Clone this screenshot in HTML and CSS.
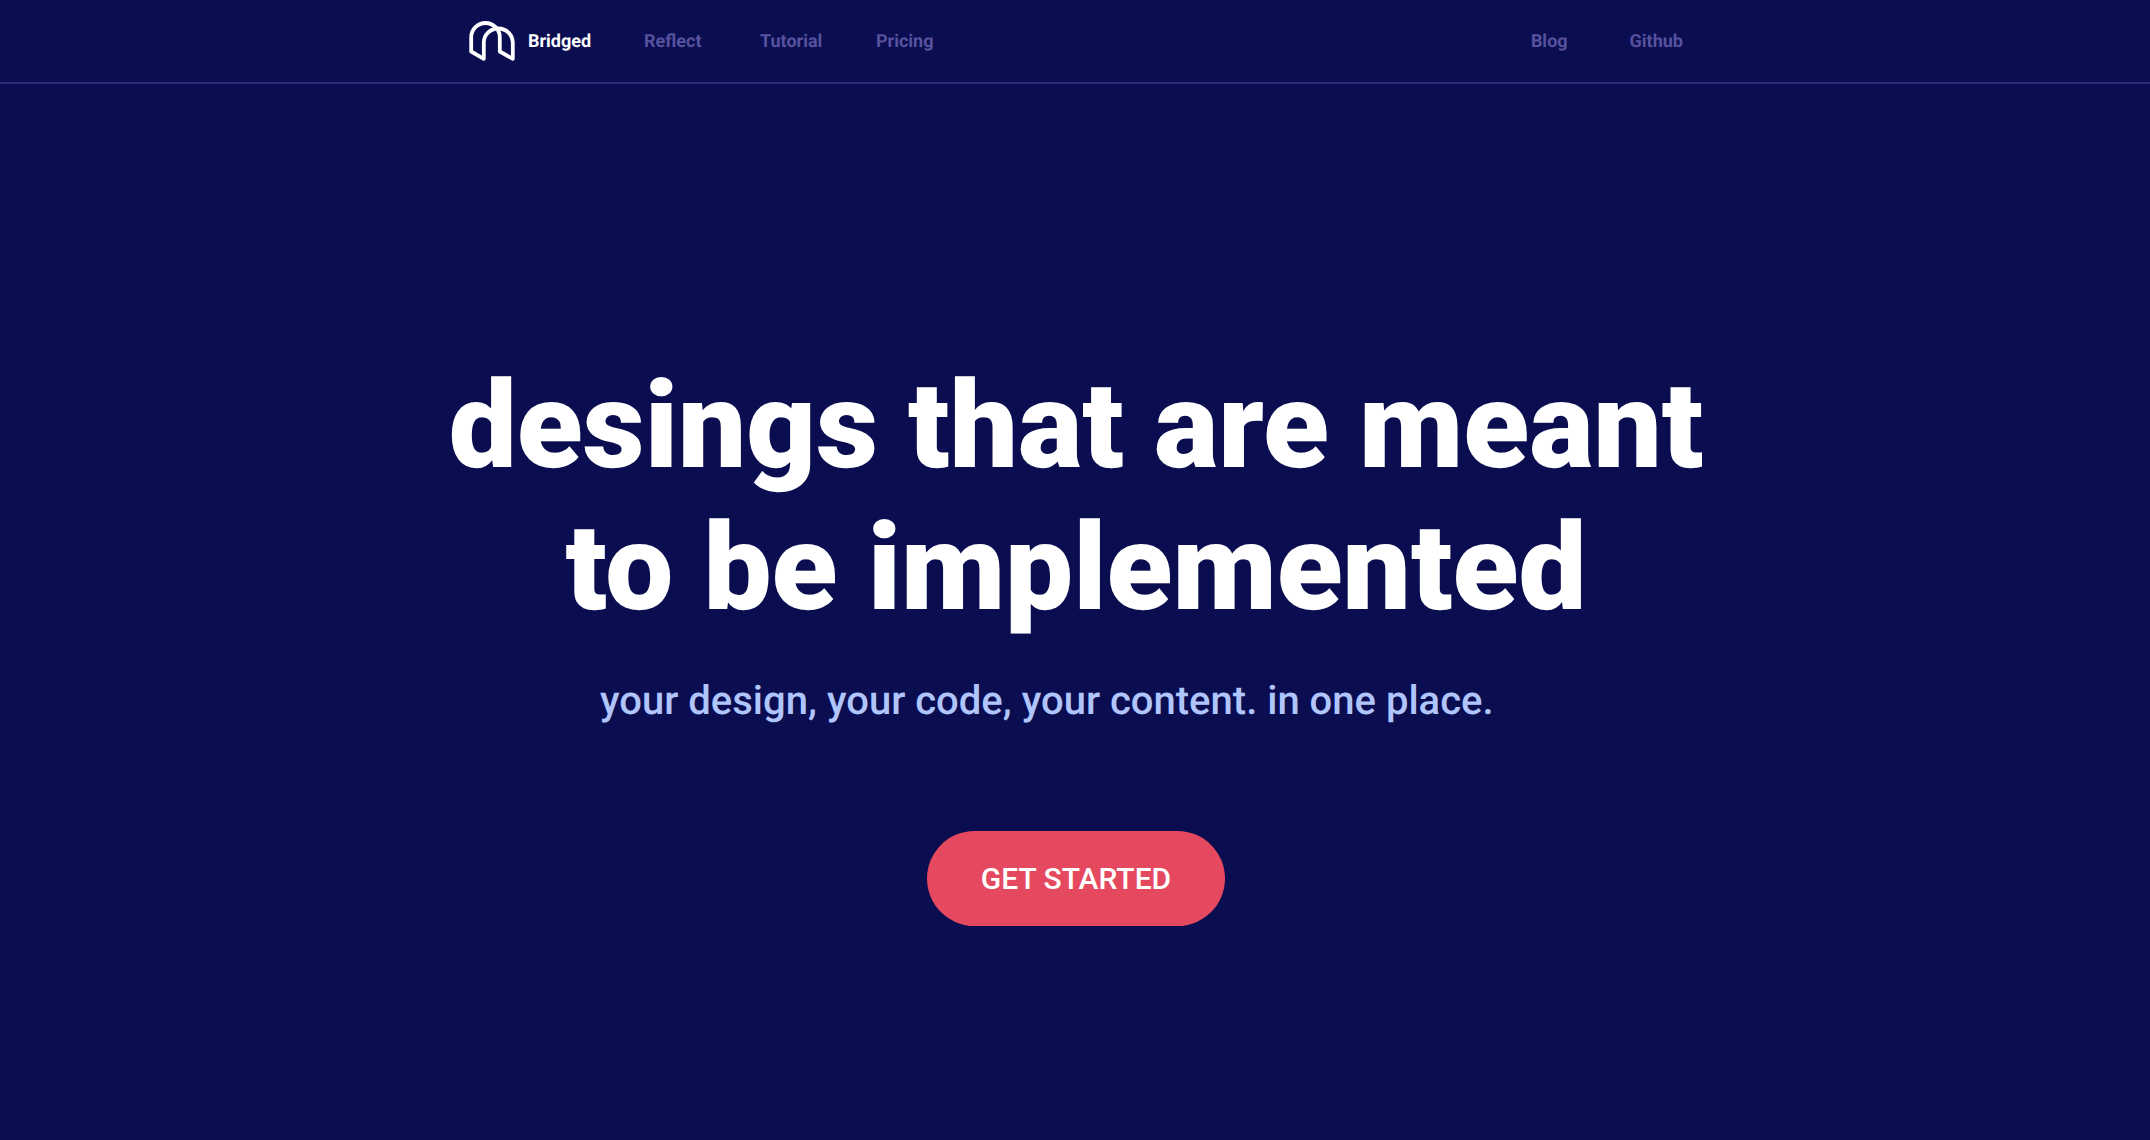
FILE: index.html
```html
<!DOCTYPE html>
<html lang="en">
<head>
  <meta charset="utf-8">
  <meta name="viewport" content="width=device-width, initial-scale=1">
  <title>Bridged</title>
  <link rel="stylesheet" href="styles.css">
</head>
<body>
  <header class="site-header">
    <nav class="nav">
      <a class="brand" href="#">
        <svg class="brand-logo" viewBox="0 0 46 40" fill="none" stroke="#fff" stroke-width="3.800" stroke-linejoin="round" stroke-linecap="round" aria-hidden="true">
          <path d="M2.200 16.200C2.200 8.300 8.600 2 16.500 2S30.800 8.300 30.800 16.200V30.500L43.800 37.800V21.600C43.800 13.700 37.300 7.500 29.300 7.500S14.800 13.700 14.800 21.600V37.800L2.200 30.500Z"/>
        </svg>
        <span class="brand-name">Bridged</span>
      </a>
      <a class="nav-link" href="#">Reflect</a>
      <a class="nav-link" href="#">Tutorial</a>
      <a class="nav-link" href="#">Pricing</a>
      <div class="nav-end">
        <a href="#">Blog</a>
        <a href="#">Github</a>
      </div>
    </nav>
  </header>
  <main class="hero">
    <h1 class="hero-title">desings that are meant<br>to be implemented</h1>
    <p class="hero-subtitle">your design, your code, your content. in one place.</p>
    <button class="cta" type="button">GET STARTED</button>
  </main>
</body>
</html>
```
FILE: styles.css
```css
* {
  box-sizing: border-box;
}

body {
  margin: 0;
  min-height: 100vh;
  background: #0a0d50;
  color: #fff;
  font-family: Roboto, sans-serif;
  text-rendering: geometricPrecision;
}

a {
  color: inherit;
  text-decoration: none;
}

.site-header {
  padding: 0 24px 0 26px;
  border-bottom: 2px solid #2d2a7c;
}

.nav {
  display: flex;
  align-items: center;
  max-width: 1214px;
  height: 82px;
  margin: 0 auto;
  color: #57519f;
  font-size: 18px;
  font-weight: 700;
}

.brand {
  display: flex;
  align-items: center;
  gap: 13px;
  color: #fff;
}

.brand-logo {
  width: 46px;
  height: 40px;
}

.brand-name,
.nav-link {
  min-width: 116px;
}

.nav-end {
  display: flex;
  gap: 62px;
  margin-left: auto;
}

.hero {
  display: flex;
  flex-direction: column;
  align-items: center;
  padding: 271px 24px 120px 26px;
}

.hero-title {
  margin: 0;
  font-size: 121px;
  font-weight: 900;
  line-height: 142px;
  text-align: center;
}

.hero-subtitle {
  width: 100%;
  max-width: 952px;
  margin: 38px 0 0;
  color: #b0c5fb;
  font-size: 40px;
  font-weight: 500;
  line-height: 48px;
}

.cta {
  margin-top: 106px;
  padding: 29px 54px;
  border: 0;
  border-radius: 48px;
  background: #e5495f;
  color: #fff;
  font: 500 30px/37px Roboto, sans-serif;
}
```
